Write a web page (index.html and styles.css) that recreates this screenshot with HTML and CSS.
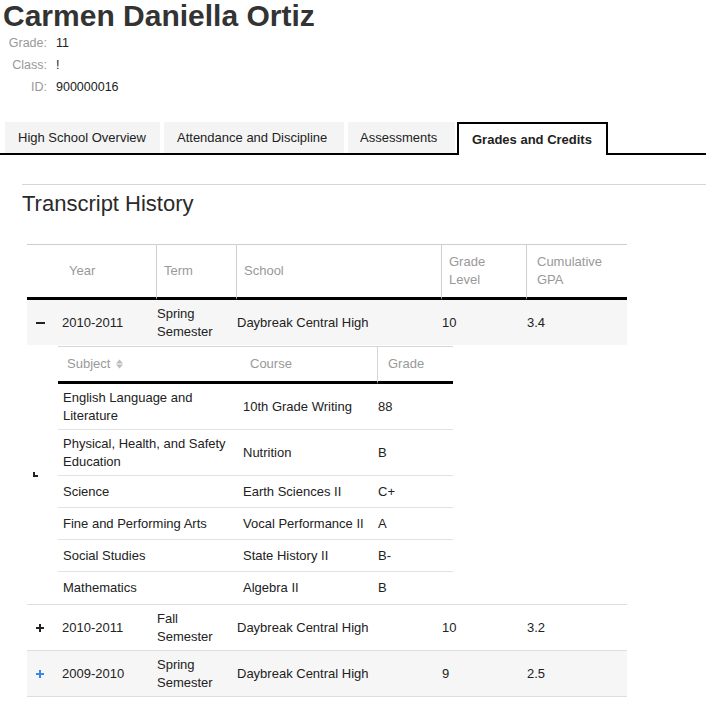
FILE: index.html
```html
<!DOCTYPE html>
<html lang="en">
<head>
<meta charset="utf-8">
<title>Carmen Daniella Ortiz</title>
<link rel="stylesheet" href="styles.css">
</head>
<body>
<header class="student">
  <h1 class="student-name">Carmen Daniella Ortiz</h1>
  <dl class="student-meta">
    <dt>Grade:</dt><dd>11</dd>
    <dt>Class:</dt><dd>!</dd>
    <dt>ID:</dt><dd>900000016</dd>
  </dl>
</header>

<nav class="tabs">
  <a class="tab tab-overview">High School Overview</a>
  <a class="tab tab-attendance">Attendance and Discipline</a>
  <a class="tab tab-assessments">Assessments</a>
  <a class="tab tab-active">Grades and Credits</a>
</nav>

<section class="panel">
  <h2 class="panel-title">Transcript History</h2>
  <table class="transcript">
    <colgroup>
      <col class="w-exp"><col class="w-year"><col class="w-term"><col class="w-school"><col class="w-level"><col class="w-gpa">
    </colgroup>
    <thead>
      <tr>
        <th class="c-exp"></th>
        <th class="c-year">Year</th>
        <th class="c-term">Term</th>
        <th class="c-school">School</th>
        <th class="c-level">Grade Level</th>
        <th class="c-gpa">Cumulative GPA</th>
      </tr>
    </thead>
    <tbody>
      <tr class="term-row striped first">
        <td class="c-exp"><svg class="icon" width="9" height="8" viewBox="0 0 9 8"><rect x="0" y="3" width="9" height="2" fill="#222"/></svg></td>
        <td>2010-2011</td>
        <td>Spring Semester</td>
        <td>Daybreak Central High</td>
        <td>10</td>
        <td>3.4</td>
      </tr>
      <tr class="detail-row">
        <td colspan="6">
          <div class="detail">
            <div class="detail-gutter"><span class="corner"></span></div>
            <table class="courses">
              <colgroup><col class="w-subject"><col class="w-course"><col class="w-grade"></colgroup>
              <thead>
                <tr>
                  <th class="k-subject">Subject <svg class="sort" width="7" height="10" viewBox="0 0 7 10"><polygon points="0,4.5 3.5,0.5 7,4.5" fill="#bbb"/><polygon points="0,5.5 7,5.5 3.5,9.5" fill="#bbb"/></svg></th>
                  <th class="k-course">Course</th>
                  <th class="k-grade">Grade</th>
                </tr>
              </thead>
              <tbody>
                <tr><td class="k-subject">English Language and Literature</td><td class="k-course">10th Grade Writing</td><td class="k-grade">88</td></tr>
                <tr><td class="k-subject">Physical, Health, and Safety Education</td><td class="k-course">Nutrition</td><td class="k-grade">B</td></tr>
                <tr><td class="k-subject">Science</td><td class="k-course">Earth Sciences II</td><td class="k-grade">C+</td></tr>
                <tr><td class="k-subject">Fine and Performing Arts</td><td class="k-course">Vocal Performance II</td><td class="k-grade">A</td></tr>
                <tr><td class="k-subject">Social Studies</td><td class="k-course">State History II</td><td class="k-grade">B-</td></tr>
                <tr class="last"><td class="k-subject">Mathematics</td><td class="k-course">Algebra II</td><td class="k-grade">B</td></tr>
              </tbody>
            </table>
          </div>
        </td>
      </tr>
      <tr class="term-row">
        <td class="c-exp"><svg class="icon" width="8" height="8" viewBox="0 0 8 8"><rect x="0" y="3" width="8" height="2" fill="#222"/><rect x="3" y="0" width="2" height="8" fill="#222"/></svg></td>
        <td>2010-2011</td>
        <td>Fall Semester</td>
        <td>Daybreak Central High</td>
        <td>10</td>
        <td>3.2</td>
      </tr>
      <tr class="term-row striped">
        <td class="c-exp"><svg class="icon" width="8" height="8" viewBox="0 0 8 8"><rect x="0" y="3" width="8" height="2" fill="#3b87e6"/><rect x="3" y="0" width="2" height="8" fill="#3b87e6"/></svg></td>
        <td>2009-2010</td>
        <td>Spring Semester</td>
        <td>Daybreak Central High</td>
        <td>9</td>
        <td>2.5</td>
      </tr>
      <tr class="term-row">
        <td class="c-exp"><svg class="icon" width="8" height="8" viewBox="0 0 8 8"><rect x="0" y="3" width="8" height="2" fill="#222"/><rect x="3" y="0" width="2" height="8" fill="#222"/></svg></td>
        <td>2009-2010</td>
        <td>Fall Semester</td>
        <td>Daybreak Central High</td>
        <td>9</td>
        <td>2.4</td>
      </tr>
    </tbody>
  </table>
</section>
</body>
</html>
```

FILE: styles.css
```css
* { box-sizing: border-box; }

body {
  margin: 0;
  font-family: "Liberation Sans", Arial, Helvetica, sans-serif;
  font-size: 13px;
  line-height: 18px;
  color: #222;
  background: #fff;
}

/* Student header */
.student-name {
  margin: 0 0 0 3px;
  font-size: 30px;
  line-height: 32px;
  font-weight: bold;
  color: #333;
}

.student-meta {
  display: grid;
  grid-template-columns: 43px auto;
  column-gap: 9px;
  justify-content: start;
  margin: 0 0 0 4px;
  font-size: 12.5px;
  line-height: 22px;
}
.student-meta dt { text-align: right; color: #999; }
.student-meta dd { margin: 0; color: #222; }

/* Tabs */
.tabs {
  display: flex;
  align-items: flex-end;
  margin-top: 24px;
  padding-left: 5px;
  border-bottom: 2px solid #000;
}
.tab {
  display: block;
  height: 31px;
  line-height: 31px;
  padding-left: 13px;
  background: #f4f4f4;
  color: #222;
  font-size: 13px;
  white-space: nowrap;
}
.tab-overview { width: 155px; margin-right: 4px; }
.tab-attendance { width: 180px; margin-right: 4px; }
.tab-assessments { width: 107px; margin-right: 2px; padding-left: 12px; }
.tab-active {
  width: 151px;
  height: 33px;
  margin-bottom: -2px;
  border: 2px solid #000;
  border-bottom: 0;
  background: #fff;
  font-weight: bold;
}

/* Panel */
.panel {
  margin: 29px 0 0 22px;
  border-top: 1px solid #d6d6d6;
}
.panel-title {
  margin: 6px 0 0;
  font-size: 22px;
  line-height: 26px;
  font-weight: normal;
  color: #2a2a2a;
}

/* Transcript table */
.transcript {
  margin: 27px 0 0 5px;
  width: 600px;
  table-layout: fixed;
  border-collapse: separate;
  border-spacing: 0;
}
.w-exp { width: 34px; }
.w-year { width: 95px; }
.w-term { width: 80px; }
.w-school { width: 205px; }
.w-level { width: 85px; }
.w-gpa { width: 101px; }

.transcript > thead th {
  padding: 8px 10px 8px 7px;
  border-top: 1px solid #cfcfcf;
  border-bottom: 3px solid #000;
  border-left: 1px solid #cfcfcf;
  color: #999;
  font-weight: normal;
  text-align: left;
  vertical-align: middle;
}
.transcript > thead th.c-exp { border-left: 0; padding: 0; }
.transcript > thead th.c-year { border-left: 0; padding-left: 8px; }
.transcript > thead th.c-gpa { padding-left: 10px; }

.term-row > td {
  padding: 4.5px 8px 4.5px 1px;
  border-top: 1px solid #dedede;
  vertical-align: middle;
  color: #222;
}
.term-row.first > td { border-top: 0; }
.term-row > td.c-exp { padding-left: 9px; padding-right: 0; }
.term-row.striped > td { background: #f6f6f6; }
.icon { display: block; }

/* Detail row */
.detail-row > td { padding: 1px 0; }
.detail { display: flex; }
.detail-gutter {
  width: 31px;
  flex: none;
  display: flex;
  align-items: center;
}
.corner {
  display: block;
  width: 5px;
  height: 5px;
  margin-left: 6px;
  border-left: 2px solid #222;
  border-bottom: 2px solid #222;
}

/* Courses sub-table */
.courses {
  width: 395px;
  table-layout: fixed;
  border-collapse: separate;
  border-spacing: 0;
}
.w-subject { width: 180px; }
.w-course { width: 139px; }
.w-grade { width: 76px; }

.courses th {
  padding: 8px 6px 8px 9px;
  border-top: 1px solid #d6d6d6;
  border-bottom: 3px solid #000;
  color: #999;
  font-weight: normal;
  text-align: left;
}
.courses th.k-course { padding-left: 12px; }
.courses th.k-grade { padding-left: 10px; border-left: 1px solid #d6d6d6; }
.sort { display: inline-block; margin-left: 2px; vertical-align: -1px; }

.courses td {
  height: 32px;
  padding: 4.5px 8px 4.5px 5px;
  border-bottom: 1px solid #e2e2e2;
  vertical-align: middle;
}
.courses td.k-grade { padding-left: 1px; }
.courses tr.last td { border-bottom: 0; height: 31px; }
```
